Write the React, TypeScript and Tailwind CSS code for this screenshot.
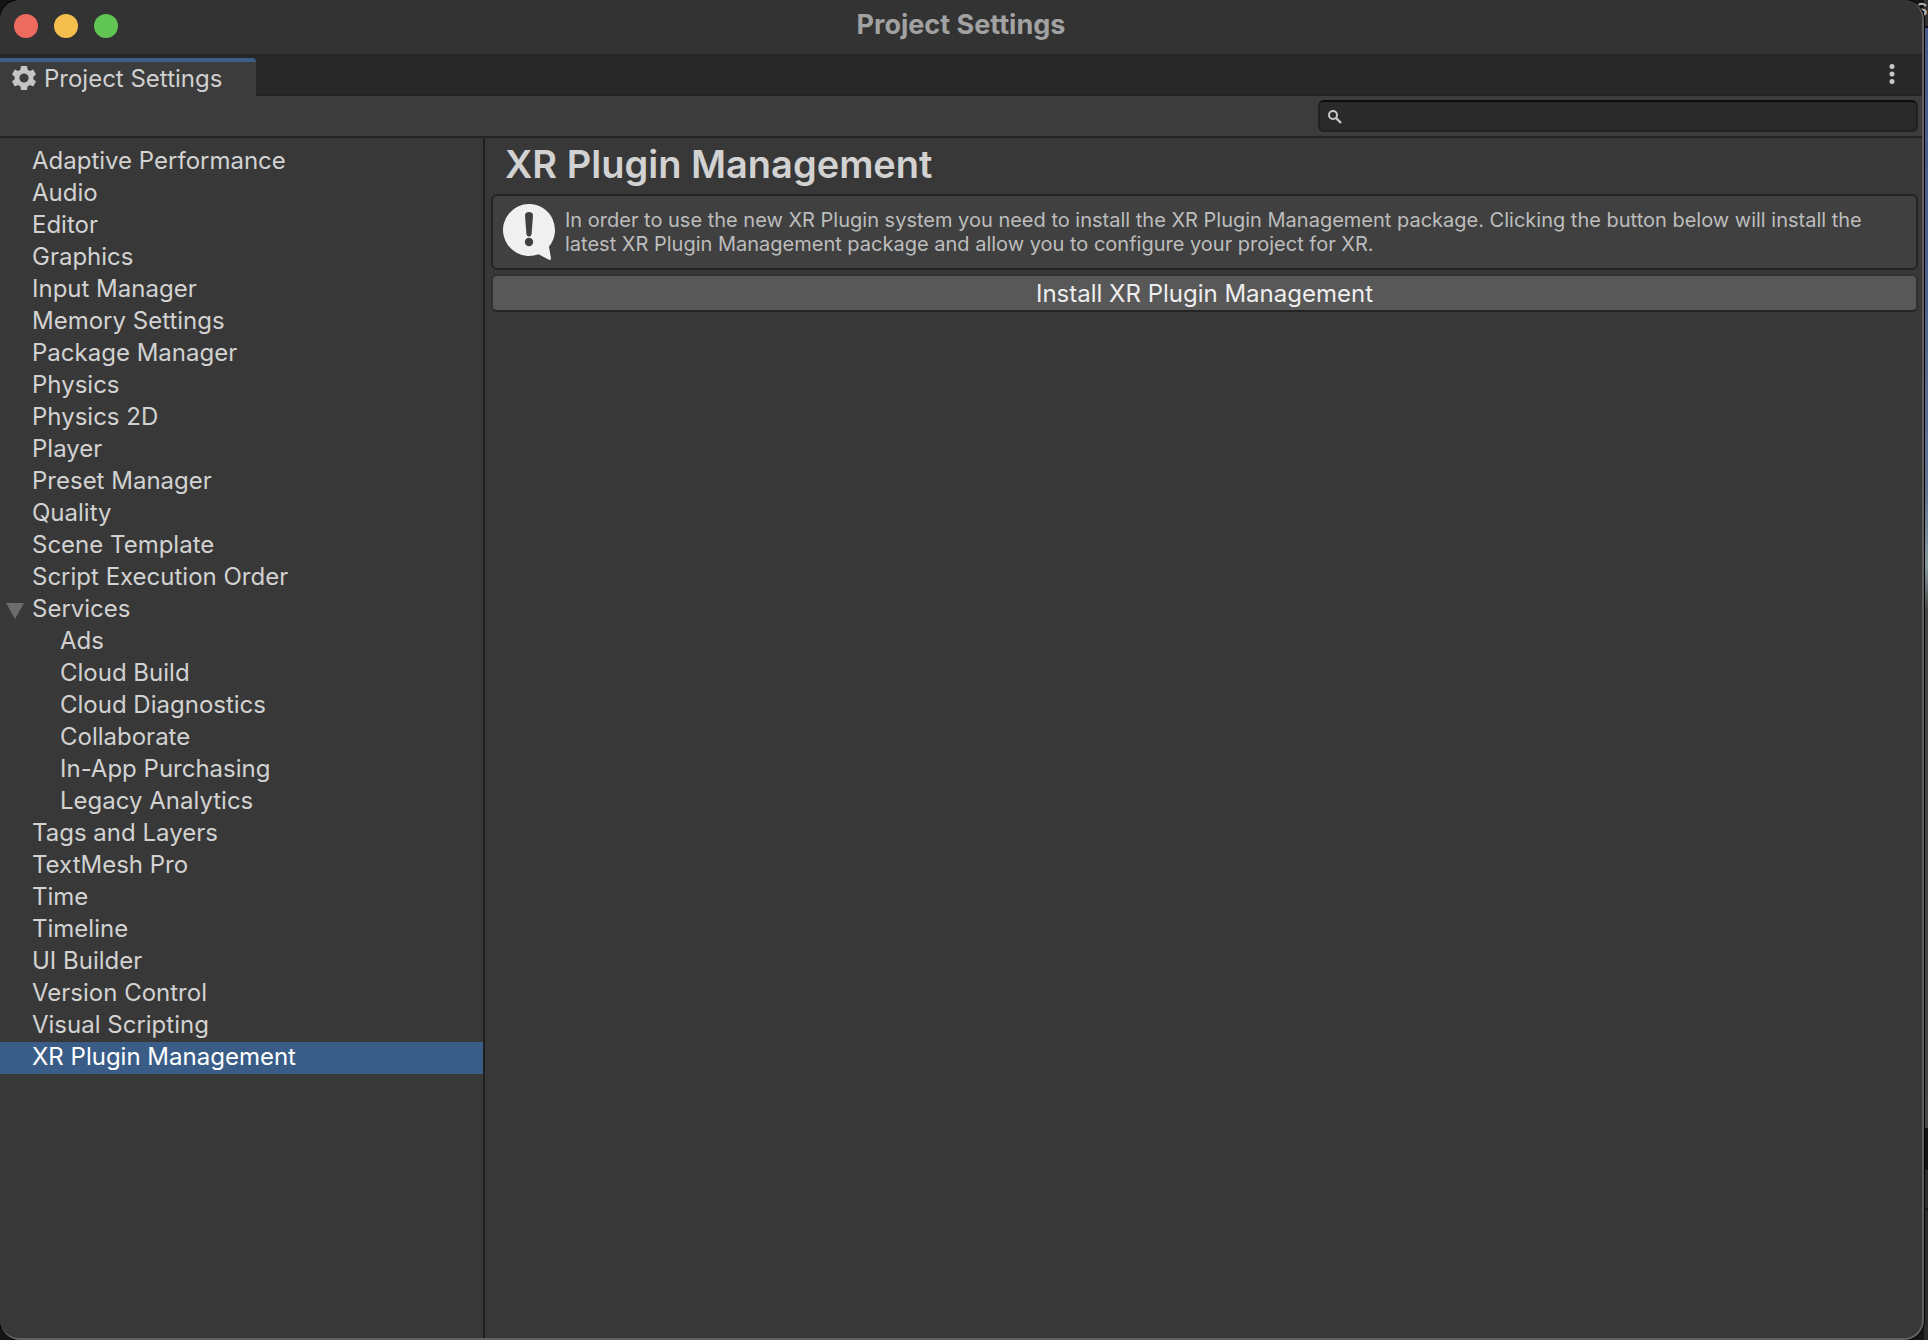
import { clsx } from "clsx";

type Category = {
  label: string;
  child?: boolean;
  expanded?: boolean;
};

const categories: Category[] = [
  { label: "Adaptive Performance" },
  { label: "Audio" },
  { label: "Editor" },
  { label: "Graphics" },
  { label: "Input Manager" },
  { label: "Memory Settings" },
  { label: "Package Manager" },
  { label: "Physics" },
  { label: "Physics 2D" },
  { label: "Player" },
  { label: "Preset Manager" },
  { label: "Quality" },
  { label: "Scene Template" },
  { label: "Script Execution Order" },
  { label: "Services", expanded: true },
  { label: "Ads", child: true },
  { label: "Cloud Build", child: true },
  { label: "Cloud Diagnostics", child: true },
  { label: "Collaborate", child: true },
  { label: "In-App Purchasing", child: true },
  { label: "Legacy Analytics", child: true },
  { label: "Tags and Layers" },
  { label: "TextMesh Pro" },
  { label: "Time" },
  { label: "Timeline" },
  { label: "UI Builder" },
  { label: "Version Control" },
  { label: "Visual Scripting" },
  { label: "XR Plugin Management" },
];

const selected = "XR Plugin Management";

function GearIcon() {
  return (
    <svg viewBox="0 0 24 24" className="size-6 shrink-0" aria-hidden="true">
      <path
        fill="#c4c4c4"
        fillRule="evenodd"
        d="M9 0h6l.6 3.6 2.2 1.3 3.400-1.300 2.800 5-2.600 2.200v2.400l2.600 2.200-2.800 5-3.400-1.300-2.200 1.300L15 24H9l-.6-3.600-2.200-1.300-3.400 1.300-2.800-5 2.600-2.200v-2.400L0 8.600l2.800-5 3.400 1.300 2.200-1.300zM12 7.400a4.600 4.600 0 1 0 0 9.200 4.600 4.600 0 0 0 0-9.200z"
      />
    </svg>
  );
}

function SearchIcon() {
  return (
    <svg viewBox="0 0 14 14" className="size-3.5 shrink-0" aria-hidden="true">
      <circle cx="5" cy="5" r="4" fill="none" stroke="#c8c8c8" strokeWidth="2" />
      <path d="M7.500 7.500 13 13" stroke="#c8c8c8" strokeWidth="2.400" />
    </svg>
  );
}

function InfoIcon() {
  return (
    <svg viewBox="0 0 52 56" className="h-14 w-13 shrink-0" aria-hidden="true">
      <path
        fill="#f0f0f0"
        d="M26 0a26 26 0 0 1 20 42.600L48 54.500q0 2-2 1.300L35.500 50.200A26 26 0 1 1 26 0z"
      />
      <path
        fill="#404040"
        d="M22 11.500q0-3.500 4-3.500t4 3.500L28.600 30q-.3 2.500-2.600 2.500T23.400 30z"
      />
      <circle cx="26" cy="38" r="4.200" fill="#404040" />
    </svg>
  );
}

function TitleBar() {
  return (
    <header className="grid h-[54px] grid-cols-[1fr_auto_1fr] items-center bg-[#333333] px-3.5 pb-1">
      <div className="flex gap-4 pt-0.5">
        <button aria-label="Close" className="size-6 rounded-full bg-[#ed6a5e]" />
        <button aria-label="Minimize" className="size-6 rounded-full bg-[#f5bf4f]" />
        <button aria-label="Zoom" className="size-6 rounded-full bg-[#61c554]" />
      </div>
      <h1 className="text-[27px] leading-8 font-bold text-[#a2a2a2]">
        Project Settings
      </h1>
    </header>
  );
}

function TabStrip() {
  return (
    <div className="flex h-[42px] bg-[#282828] pt-1">
      <button className="flex w-64 items-center gap-2 rounded-tr border-t-4 border-[#3a5e88] bg-[#3c3c3c] pb-0.5 pl-3 text-2xl leading-8 text-[#d0d0d0]">
        <GearIcon />
        <span className="pt-0.5">Project Settings</span>
      </button>
      <div className="-mt-1 flex flex-1 items-center justify-end border-b-2 border-[#222222] pr-5">
        <button aria-label="Window menu" className="flex w-5 justify-center">
          <svg viewBox="0 0 6 20" className="h-5 w-1.5" fill="#c8c8c8">
            <circle cx="3" cy="2.500" r="2.500" />
            <circle cx="3" cy="10" r="2.500" />
            <circle cx="3" cy="17.500" r="2.500" />
          </svg>
        </button>
      </div>
    </div>
  );
}

function Toolbar() {
  return (
    <div className="flex h-[42px] items-start justify-end border-b-2 border-[#232323] bg-[#3c3c3c] px-1 pt-1">
      <label className="flex h-8 w-[600px] items-center gap-2 rounded-md border-2 border-[#212121] border-t-[#0d0d0d] bg-[#2a2a2a] px-2 pt-0.5">
        <SearchIcon />
        <input
          type="text"
          aria-label="Search settings"
          className="h-6 min-w-0 flex-1 bg-transparent text-xl text-[#d2d2d2] outline-none"
        />
      </label>
    </div>
  );
}

function CategoryList() {
  return (
    <nav className="w-[485px] shrink-0 border-r-2 border-[#1f1f1f] pt-2">
      <ul>
        {categories.map(({ label, child, expanded }) => (
          <li key={label}>
            <a
              href="#"
              className={clsx(
                "flex h-8 items-center pb-0.5 text-2xl leading-7 whitespace-nowrap",
                child ? "pl-15" : expanded ? "pl-1.5" : "pl-8",
                label === selected ? "bg-[#3a5d87] text-white" : "text-[#d2d2d2]",
              )}
            >
              {expanded && (
                <svg viewBox="0 0 18 16" className="mt-1 mr-2 h-4 w-[18px]" aria-hidden="true">
                  <path d="M0 0h18L9 16z" fill="#6c6c6c" />
                </svg>
              )}
              {label}
            </a>
          </li>
        ))}
      </ul>
    </nav>
  );
}

function SettingsPanel() {
  return (
    <main className="min-w-0 flex-1 pr-1 pl-1.5">
      <h2 className="flex h-14 items-center pb-1 pl-3.5 text-[38px] font-semibold text-[#d2d2d2]">
        XR Plugin Management
      </h2>
      <div className="flex min-h-19 items-center gap-2.5 rounded-md border-2 border-[#232323] bg-[#404040] px-2.5">
        <InfoIcon />
        <p className="text-xl leading-6 text-[#bdbdbd]">
          In order to use the new XR Plugin system you need to install the XR Plugin
          Management package. Clicking the button below will install the latest XR
          Plugin Management package and allow you to configure your project for XR.
        </p>
      </div>
      <button className="mt-1 flex h-[38px] w-full items-center justify-center rounded-md border-2 border-[#303030] border-b-[#242424] bg-[#585858] pt-0.5 text-2xl text-[#eeeeee]">
        Install XR Plugin Management
      </button>
    </main>
  );
}

/* Sliver of the editor window behind the settings window */
function EditorBackdrop() {
  return (
    <div className="relative flex w-1 flex-col bg-[#2b2b2b]">
      <div className="h-7 border-b-2 border-[#111111] bg-[#333333]" />
      <span className="absolute top-0 right-0 text-2xl leading-4 text-[#b8b8b8]">s</span>
      <div className="h-[1100px] bg-[linear-gradient(#46598a_0%,#4f628a_25%,#5f7390_42%,#84979c_49%,#454545_53%,#4a4744_100%)]" />
      <div className="h-[42px] bg-[#151515]" />
      <div className="h-10 border-b-2 border-[#1a1a1a] bg-[#2e2e2e]" />
    </div>
  );
}

export default function App() {
  return (
    <div className="flex min-h-screen bg-[#151515] font-['Inter',sans-serif]">
      <div className="relative z-10 flex min-w-0 flex-1 flex-col overflow-hidden rounded-[20px] border-r-2 border-b-2 border-[#606060] bg-[#383838] shadow-[0_0_0_1px_#000000]">
        <TitleBar />
        <TabStrip />
        <Toolbar />
        <div className="flex flex-1">
          <CategoryList />
          <SettingsPanel />
        </div>
      </div>
      <EditorBackdrop />
    </div>
  );
}
